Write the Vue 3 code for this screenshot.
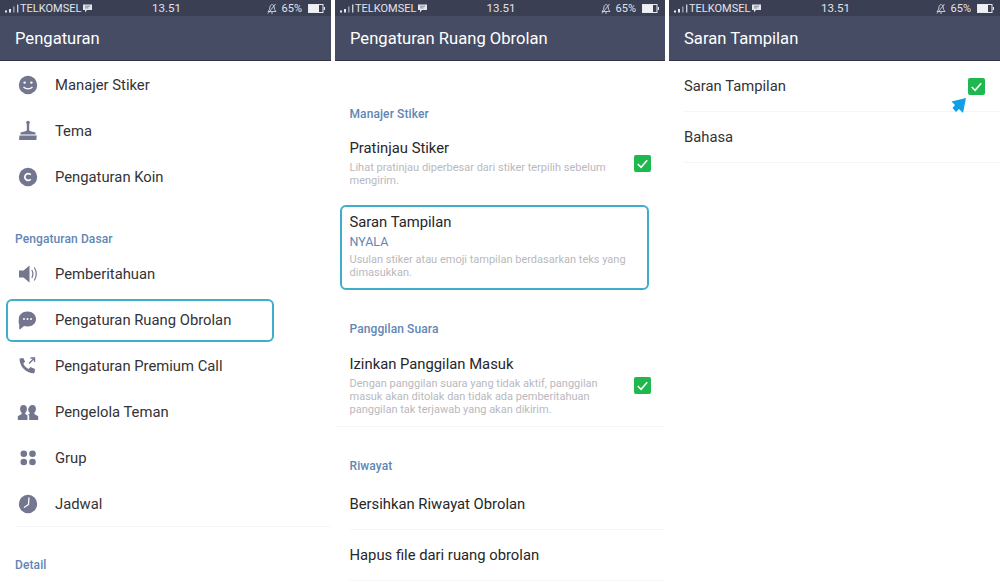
<template>
  <div class="screens">
    <section v-for="(title, i) in titles" :key="title" class="phone" :class="'phone-' + i">
      <div class="status">
        <div class="status-left">
          <svg width="14" height="9" viewBox="0 0 14 9">
            <rect x="0" y="6.5" width="2" height="2" fill="#e8e9ee" />
            <rect x="4" y="5" width="2" height="3.5" fill="#e8e9ee" />
            <rect x="8" y="2.5" width="1.6" height="6" fill="#8f93a5" />
            <rect x="12" y="0.5" width="1.4" height="8" fill="#c9cbd5" />
          </svg>
          <span>TELKOMSEL</span>
          <svg class="bubble" width="9" height="9" viewBox="0 0 9 9">
            <path d="M0 0.5h9v5.5H4L2 8.4V6H0z" fill="#e4e5eb" />
            <path d="M2 2.2h5M2 3.9h3.5" stroke="#6d7186" stroke-width="0.8" />
          </svg>
        </div>
        <span class="clock">13.51</span>
        <div class="status-right">
          <svg class="bell" width="10" height="11" viewBox="0 0 10 11" fill="none" stroke="#d5d7df" stroke-width="0.9">
            <path d="M1 8.5h8L7.6 6.6 7 3.4C6.7 1.200 3.6 1 3.1 3.3L2.5 6.6zM4 10h2M1 10.5 8.5 1" />
          </svg>
          <span>65%</span>
          <svg width="17" height="9" viewBox="0 0 17 9">
            <rect x="0.5" y="0.5" width="14.500" height="8" fill="none" stroke="#e8e9ee" />
            <rect x="1" y="1" width="10" height="7" fill="#eff0f4" />
            <rect x="15.800" y="3" width="1.200" height="3" fill="#e8e9ee" />
          </svg>
        </div>
      </div>
      <header class="title-bar">{{ title }}</header>

      <div v-if="i === 0" class="menu">
        <div v-for="item in topMenu" :key="item.label" class="menu-row">
          <svg class="menu-icon" width="24" height="24" viewBox="0 0 24 24" v-html="item.icon"></svg>
          <span>{{ item.label }}</span>
        </div>
        <h3 class="group-label basic">Pengaturan Dasar</h3>
        <div v-for="item in basicMenu" :key="item.label" class="menu-row" :class="{ marked: item.marked }">
          <svg class="menu-icon" width="24" height="24" viewBox="0 0 24 24" v-html="item.icon"></svg>
          <span>{{ item.label }}</span>
        </div>
        <div class="menu-end"></div>
        <h3 class="group-label detail">Detail</h3>
      </div>

      <div v-else-if="i === 1" class="options">
        <h3 class="group-label first">Manajer Stiker</h3>
        <div class="option">
          <div class="option-text">
            <div class="option-name">Pratinjau Stiker</div>
            <p>Lihat pratinjau diperbesar dari stiker terpilih sebelum<br />mengirim.</p>
          </div>
          <svg class="check" width="17" height="17" viewBox="0 0 18 18">
            <rect width="18" height="18" rx="2" fill="#1fb84f" />
            <path d="M4 9.500 7.500 13 14 5.500" fill="none" stroke="#fff" stroke-width="1.600" />
          </svg>
        </div>
        <div class="option marked">
          <div class="option-text">
            <div class="option-name">Saran Tampilan</div>
            <div class="option-state">NYALA</div>
            <p>Usulan stiker atau emoji tampilan berdasarkan teks yang<br />dimasukkan.</p>
          </div>
        </div>
        <h3 class="group-label call">Panggilan Suara</h3>
        <div class="option lined">
          <div class="option-text">
            <div class="option-name">Izinkan Panggilan Masuk</div>
            <p>Dengan panggilan suara yang tidak aktif, panggilan<br />masuk akan ditolak dan tidak ada pemberitahuan<br />panggilan tak terjawab yang akan dikirim.</p>
          </div>
          <svg class="check" width="17" height="17" viewBox="0 0 18 18">
            <rect width="18" height="18" rx="2" fill="#1fb84f" />
            <path d="M4 9.500 7.500 13 14 5.500" fill="none" stroke="#fff" stroke-width="1.600" />
          </svg>
        </div>
        <h3 class="group-label history">Riwayat</h3>
        <div class="plain-row">Bersihkan Riwayat Obrolan</div>
        <div class="plain-row">Hapus file dari ruang obrolan</div>
      </div>

      <div v-else class="suggest">
        <div class="plain-row">
          <span>Saran Tampilan</span>
          <svg class="check" width="17" height="17" viewBox="0 0 18 18">
            <rect width="18" height="18" rx="2" fill="#1fb84f" />
            <path d="M4 9.500 7.500 13 14 5.500" fill="none" stroke="#fff" stroke-width="1.600" />
          </svg>
          <svg class="arrow" width="16" height="16" viewBox="0 0 16 16">
            <path d="M15 0 0.500 3.500 4 7 1.500 10 5 14 8 11 12 15z" fill="#12a0e4" />
          </svg>
        </div>
        <div class="plain-row">Bahasa</div>
      </div>
    </section>
  </div>
</template>

<script setup>
const titles = ['Pengaturan', 'Pengaturan Ruang Obrolan', 'Saran Tampilan']

const topMenu = [
  {
    label: 'Manajer Stiker',
    icon: '<circle cx="12" cy="12" r="9.200" fill="#72768f"/><circle cx="8.600" cy="9.600" r="1.200" fill="#fff"/><circle cx="15.400" cy="9.600" r="1.200" fill="#fff"/><path d="M7.500 14c2.500 2.600 6.500 2.600 9 0" fill="none" stroke="#fff" stroke-width="1.300"/>'
  },
  {
    label: 'Tema',
    icon: '<circle cx="12" cy="3.500" r="1.800" fill="#72768f"/><path d="M10.800 4h2.400v6.500c0 1 .6 1.500 1.500 1.700l4.800 1.300v2H4.500v-2l4.800-1.300c.9-.2 1.500-.7 1.500-1.700z" fill="#72768f"/><path d="M3.500 16.500h17.300l-.5 4.500H3z" fill="#72768f"/>'
  },
  {
    label: 'Pengaturan Koin',
    icon: '<circle cx="12" cy="12" r="9.200" fill="#72768f"/><path d="M14.800 9.800A3.400 3.400 0 1 0 14.800 14.200" fill="none" stroke="#fff" stroke-width="1.700"/>'
  }
]

const basicMenu = [
  {
    label: 'Pemberitahuan',
    icon: '<path d="M3 8.500h4.500L13.500 3.500v17l-6-5H3z" fill="#72768f"/><path d="M15.800 8c1.400 2.500 1.400 5.500 0 8M18.300 5.500c2.400 4 2.400 9 0 13" fill="none" stroke="#72768f" stroke-width="1.200"/>'
  },
  {
    label: 'Pengaturan Ruang Obrolan',
    marked: true,
    icon: '<path d="M11.500 3.500c5.200 0 8.500 3.300 8.500 7.500s-3.300 7.500-8.500 7.500c-1.400 0-2.500-.2-3.500-.5L4.200 21.300c-.6.300-1 0-1-.7v-4.300C2.300 14.800 2.800 13 2.800 11 2.800 6.800 6.300 3.500 11.500 3.500z" fill="#72768f"/><circle cx="8" cy="11" r="1" fill="#fff"/><circle cx="11.500" cy="11" r="1" fill="#fff"/><circle cx="15" cy="11" r="1" fill="#fff"/>'
  },
  {
    label: 'Pengaturan Premium Call',
    icon: '<path d="M4 4.500 7.300 4l1.800 3.800-1.800 1.700c.9 2.400 3 4.500 5.400 5.500l1.700-1.900 4.600 1.900-.4 3.500c-.1.500-.4.700-.9.700C10 18.800 3.900 12.500 3.500 5.400c0-.5.100-.8.500-.9z" fill="#72768f"/><path d="M13 9.500l5-5M14.500 4h4v4" fill="none" stroke="#72768f" stroke-width="1.400"/>'
  },
  {
    label: 'Pengelola Teman',
    icon: '<path d="M7.500 5c2.400 0 3.600 1.800 3.400 4.300-.1 1.600-.7 2.800-1.600 3.500v1.300l2.200 1.400V20H1.800v-3.800l3.900-2.100v-1.300C4.800 12.100 4.200 10.900 4.100 9.300 3.900 6.800 5.100 5 7.500 5z" fill="#72768f"/><path d="M16.500 5c2.400 0 3.600 1.800 3.400 4.300-.1 1.600-.7 2.800-1.600 3.500v1.300l3.900 2.100V20h-9v-4.500l-1.500-1 2-.4v-1.300c-.9-.7-1.500-1.900-1.600-3.500C12.900 6.800 14.100 5 16.500 5z" fill="#72768f"/>'
  },
  {
    label: 'Grup',
    icon: '<circle cx="7.800" cy="7.800" r="3.300" fill="#72768f"/><circle cx="16.500" cy="7.800" r="3.300" fill="#72768f"/><circle cx="7.800" cy="16" r="3.300" fill="#72768f"/><circle cx="16.500" cy="16" r="3.300" fill="#72768f"/>'
  },
  {
    label: 'Jadwal',
    icon: '<circle cx="12" cy="12" r="9.200" fill="#72768f"/><path d="M13 5.500 12.500 12.500 8 15.500" fill="none" stroke="#fff" stroke-width="1.300"/>'
  }
]
</script>

<style scoped>
.screens {
  display: flex;
  gap: 4px;
  width: 1000px;
  height: 588px;
  overflow: hidden;
  background: #fff;
  font-family: Roboto, "Liberation Sans", sans-serif;
  color: #333337;
}

.phone {
  width: 331px;
  flex-shrink: 0;
  height: 588px;
  overflow: hidden;
}

.phone-1 {
  width: 330px;
}

.status {
  height: 16px;
  padding: 0 6px 0 5px;
  display: grid;
  grid-template-columns: 1fr auto 1fr;
  align-items: center;
  background: #3a3f53;
  color: #e2e3ea;
  font-size: 11px;
}

.status-left,
.status-right {
  display: flex;
  align-items: center;
  gap: 1px;
}

.status-right {
  justify-content: flex-end;
  gap: 6px;
}

.bubble {
  margin-left: 1px;
}

.bell {
  margin-right: -1px;
}

.clock {
  margin-left: 3px;
  font-size: 11.500px;
}

.title-bar {
  height: 44px;
  padding: 0 15px;
  line-height: 46px;
  background: #464c64;
  border-bottom: 1px solid #2f3342;
  color: #fff;
  font-size: 16.600px;
}

.menu {
  padding-top: 1px;
}

.menu-row {
  position: relative;
  height: 46px;
  padding-left: 16px;
  display: flex;
  align-items: center;
  gap: 15px;
  font-size: 14.800px;
}

.menu-row.marked::after,
.option.marked::after {
  content: '';
  position: absolute;
  box-sizing: border-box;
  border: 2px solid #3eaec9;
  border-radius: 6px;
}

.menu-row.marked::after {
  left: 6px;
  top: 2px;
  width: 268px;
  height: 43px;
}

.group-label {
  margin: 0;
  padding-left: 15px;
  color: #5f86b4;
  font-size: 12px;
  font-weight: 500;
  line-height: 14px;
  letter-spacing: 0.1px;
}

.group-label.basic {
  padding-top: 32px;
  padding-bottom: 5px;
}

.menu-end {
  border-bottom: 1px solid #f6f6f6;
  margin: -1px 0 0 15px;
}

.group-label.detail {
  padding-top: 31px;
}

.options {
  padding-top: 46px;
}

.options .group-label,
.option {
  padding-left: 14.500px;
}

.option {
  position: relative;
  padding-right: 14px;
  display: flex;
  align-items: center;
  justify-content: space-between;
}

.option-name {
  font-size: 14.800px;
  line-height: 18px;
  color: #26262a;
}

.option-state {
  margin-top: 3px;
  color: #5f86b4;
  font-size: 12.500px;
  line-height: 15px;
}

.option p {
  margin: 4px 0 0;
  color: #b9b9be;
  font-size: 11px;
  line-height: 13px;
}

.group-label.first {
  padding-bottom: 18px;
}

.option.marked {
  margin-top: 20px;
  padding-top: 6px;
  padding-bottom: 11px;
}

.option.marked::after {
  left: 5px;
  top: -2px;
  width: 309px;
  height: 85px;
}

.group-label.call {
  padding-top: 32px;
  padding-bottom: 19px;
}

.option.lined {
  padding-bottom: 10px;
  border-bottom: 1px solid #f6f6f6;
}

.group-label.history {
  padding-top: 32px;
  padding-bottom: 6px;
}

.plain-row {
  position: relative;
  height: 50px;
  margin-left: 15px;
  padding-right: 15px;
  display: flex;
  align-items: center;
  justify-content: space-between;
  border-bottom: 1px solid #f6f6f6;
  font-size: 14.800px;
}

.options .plain-row {
  margin-left: 14.500px;
  color: #26262a;
}

.arrow {
  position: absolute;
  right: 33px;
  top: 37px;
}
</style>

<style>
html,
body {
  margin: 0;
  background: #fff;
}
</style>
